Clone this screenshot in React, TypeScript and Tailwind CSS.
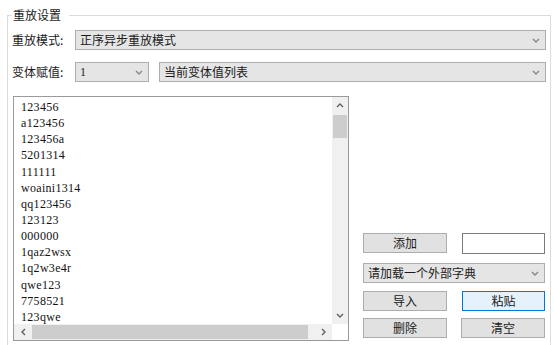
import { ReactNode } from "react";

const words = [
  "123456",
  "a123456",
  "123456a",
  "5201314",
  "111111",
  "woaini1314",
  "qq123456",
  "123123",
  "000000",
  "1qaz2wsx",
  "1q2w3e4r",
  "qwe123",
  "7758521",
  "123qwe",
];

function Chevron({ dir = "down" }: { dir?: "down" | "up" | "left" | "right" }) {
  const pts =
    dir === "down"
      ? "1,1 4,4 7,1"
      : dir === "up"
      ? "1,4 4,1 7,4"
      : dir === "left"
      ? "4,1 1,4 4,7"
      : "1,1 4,4 1,7";
  const w = dir === "down" || dir === "up" ? 8 : 5;
  const h = dir === "down" || dir === "up" ? 5 : 8;
  return (
    <svg width={w} height={h} viewBox={`0 0 ${w} ${h}`}>
      <polyline points={pts} fill="none" stroke="#606060" strokeWidth="1.4" />
    </svg>
  );
}

function Combo({ text, className }: { text: string; className: string }) {
  return (
    <div
      className={`flex h-[20px] items-center justify-between border border-[#adadad] bg-[#e5e5e5] pl-[4px] pr-[5px] ${className}`}
    >
      <span className="leading-none text-[#1a1a1a]">{text}</span>
      <span className="opacity-70">
        <Chevron />
      </span>
    </div>
  );
}

function Btn({ children, focused }: { children: ReactNode; focused?: boolean }) {
  return (
    <div
      className={
        focused
          ? "flex h-[20px] w-[83px] items-center justify-center border border-[#0078d7] bg-[#e5f1fb] leading-none"
          : "flex h-[20px] w-[84px] items-center justify-center border border-[#adadad] bg-[#e1e1e1] leading-none"
      }
    >
      {children}
    </div>
  );
}

export default function App() {
  return (
    <div className="h-[345px] w-[554px] overflow-hidden bg-white pl-[7px] pr-[3px] pt-[7px] font-['Noto_Sans_CJK_SC',sans-serif] text-[12px] text-[#1a1a1a]">
      <fieldset className="h-[360px] border border-[#dcdcdc] pl-[4px] pr-[4px]">
        <legend className="pl-[1px] pr-[8px] leading-[16px]">重放设置</legend>

        <div className="mt-[7px] flex items-center">
          <span className="w-[63px] leading-none">重放模式:</span>
          <Combo text="正序异步重放模式" className="w-[471px]" />
        </div>

        <div className="mt-[12px] flex items-center">
          <span className="w-[63px] leading-none">变体赋值:</span>
          <Combo text="1" className="w-[74px] font-['Liberation_Serif',serif]" />
          <Combo text="当前变体值列表" className="ml-[10px] w-[387px]" />
        </div>

        <div className="mt-[14px] flex">
          <div className="ml-[1px] grid h-[245px] w-[336px] grid-cols-[1fr_16px] grid-rows-[1fr_16px] border border-[#9a9a9a]">
            <div className="overflow-hidden pl-[7px] pt-[2px] font-['Liberation_Serif',serif] text-[12px] tracking-[0.3px] text-[#111]">
              {words.map((w) => (
                <div key={w} className="h-[16.15px] leading-[16px]">
                  {w}
                </div>
              ))}
            </div>
            <div className="flex flex-col bg-[#f0f0f0]">
              <div className="flex h-[17px] items-center justify-center">
                <Chevron dir="up" />
              </div>
              <div className="mx-[1px] mt-[1px] h-[23px] bg-[#cdcdcd]" />
              <div className="flex-1" />
              <div className="flex h-[17px] items-center justify-center">
                <Chevron dir="down" />
              </div>
            </div>
            <div className="flex items-center bg-[#f0f0f0]">
              <div className="flex h-full w-[18px] items-center justify-center">
                <Chevron dir="left" />
              </div>
              <div className="my-[1px] h-[14px] w-[276px] bg-[#cdcdcd]" />
              <div className="flex-1" />
              <div className="flex h-full w-[18px] items-center justify-center">
                <Chevron dir="right" />
              </div>
            </div>
            <div className="bg-white" />
          </div>

          <div className="ml-[14px] flex w-[182px] flex-col">
            <div className="mt-[137px] flex justify-between">
              <Btn>添加</Btn>
              <div className="h-[21px] w-[83px] border border-[#7a7a7a] bg-white" />
            </div>
            <Combo text="请加载一个外部字典" className="mt-[9px] w-[182px]" />
            <div className="mt-[8px] flex justify-between">
              <Btn>导入</Btn>
              <Btn focused>粘贴</Btn>
            </div>
            <div className="mt-[7px] flex justify-between">
              <Btn>删除</Btn>
              <Btn>清空</Btn>
            </div>
          </div>
        </div>
      </fieldset>
    </div>
  );
}
